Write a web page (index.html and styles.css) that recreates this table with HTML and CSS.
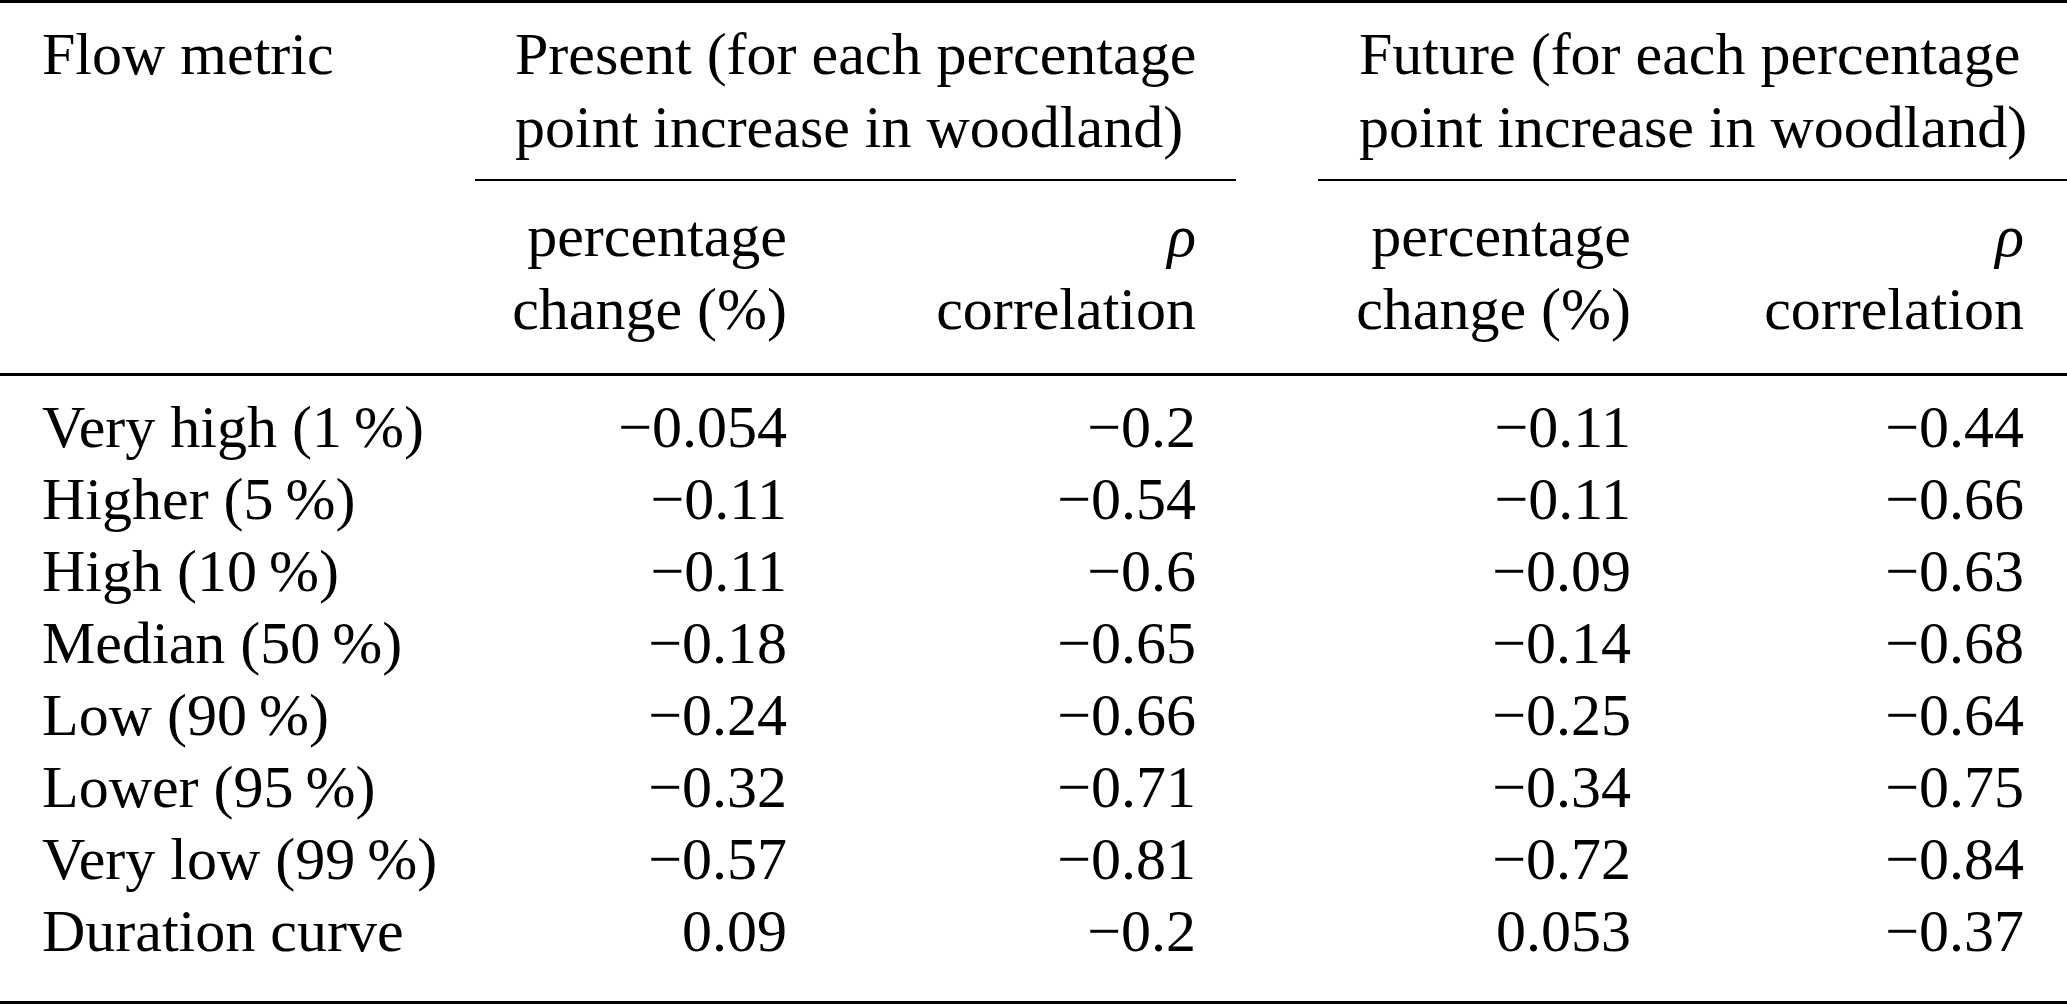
FILE: index.html
```html
<!DOCTYPE html>
<html lang="en">
<head>
<meta charset="utf-8">
<title>Flow metrics and woodland</title>
<link rel="stylesheet" href="styles.css">
</head>
<body>
<table class="tbl">
  <colgroup>
    <col class="c1"><col class="c2"><col class="c3"><col class="c4"><col class="c5">
  </colgroup>
  <thead>
    <tr class="grp">
      <th class="metric" rowspan="2">Flow metric</th>
      <th class="g" colspan="2"><div class="gline present">Present (for each percentage<br>point increase in woodland)</div></th>
      <th class="g" colspan="2"><div class="gline future">Future (for each percentage<br>point increase in woodland)</div></th>
    </tr>
    <tr class="sub">
      <th>percentage<br>change (%)</th>
      <th><i>ρ</i><br>correlation</th>
      <th>percentage<br>change (%)</th>
      <th><i>ρ</i><br>correlation</th>
    </tr>
  </thead>
  <tbody>
    <tr><td>Very high (1&#8201;%)</td><td>−0.054</td><td>−0.2</td><td>−0.11</td><td>−0.44</td></tr>
    <tr><td>Higher (5&#8201;%)</td><td>−0.11</td><td>−0.54</td><td>−0.11</td><td>−0.66</td></tr>
    <tr><td>High (10&#8201;%)</td><td>−0.11</td><td>−0.6</td><td>−0.09</td><td>−0.63</td></tr>
    <tr><td>Median (50&#8201;%)</td><td>−0.18</td><td>−0.65</td><td>−0.14</td><td>−0.68</td></tr>
    <tr><td>Low (90&#8201;%)</td><td>−0.24</td><td>−0.66</td><td>−0.25</td><td>−0.64</td></tr>
    <tr><td>Lower (95&#8201;%)</td><td>−0.32</td><td>−0.71</td><td>−0.34</td><td>−0.75</td></tr>
    <tr><td>Very low (99&#8201;%)</td><td>−0.57</td><td>−0.81</td><td>−0.72</td><td>−0.84</td></tr>
    <tr><td>Duration curve</td><td>0.09</td><td>−0.2</td><td>0.053</td><td>−0.37</td></tr>
  </tbody>
</table>
</body>
</html>
```

FILE: styles.css
```css
html, body {
  margin: 0;
  padding: 0;
  background: #ffffff;
}

body {
  font-family: "Liberation Serif", "Times New Roman", serif;
  font-size: 60px;
  color: #000000;
}

.tbl {
  width: 2067px;
  table-layout: fixed;
  border-collapse: separate;
  border-spacing: 0;
  border-top: 3px solid #000;
  border-bottom: 3px solid #000;
}

.c1 { width: 475px; }
.c2 { width: 352px; }
.c3 { width: 409px; }
.c4 { width: 435px; }
.c5 { width: 396px; }

.tbl th,
.tbl td {
  padding: 0;
  font-weight: normal;
  white-space: nowrap;
}

/* header */
.tbl thead th {
  line-height: 73px;
  vertical-align: top;
}

.metric {
  text-align: left;
  padding: 15px 0 0 42px !important;
  border-bottom: 3px solid #000;
}

.g {
  text-align: left;
  padding-top: 15px !important;
}

.gline {
  padding-bottom: 15px;
  border-bottom: 2px solid #000;
}

.gline.present {
  padding-left: 40px;
}

.gline.future {
  margin-left: 82px;
  padding-left: 41px;
}

.sub th {
  text-align: right;
  padding-top: 19px !important;
  padding-bottom: 27px !important;
  border-bottom: 3px solid #000;
}

.sub th i {
  font-style: italic;
}

/* body */
.tbl td {
  line-height: 72px;
  text-align: right;
}

.tbl td:first-child {
  text-align: left;
  padding-left: 42px;
}

.tbl tbody tr:first-child td {
  padding-top: 15px;
}

.tbl tbody tr:last-child td {
  padding-bottom: 34px;
}

.tbl td:nth-child(2),
.sub th:nth-child(1) { padding-right: 40px; }

.tbl td:nth-child(3),
.sub th:nth-child(2) { padding-right: 40px; }

.tbl td:nth-child(4),
.sub th:nth-child(3) { padding-right: 40px; }

.tbl td:nth-child(5),
.sub th:nth-child(4) { padding-right: 43px; }
```
